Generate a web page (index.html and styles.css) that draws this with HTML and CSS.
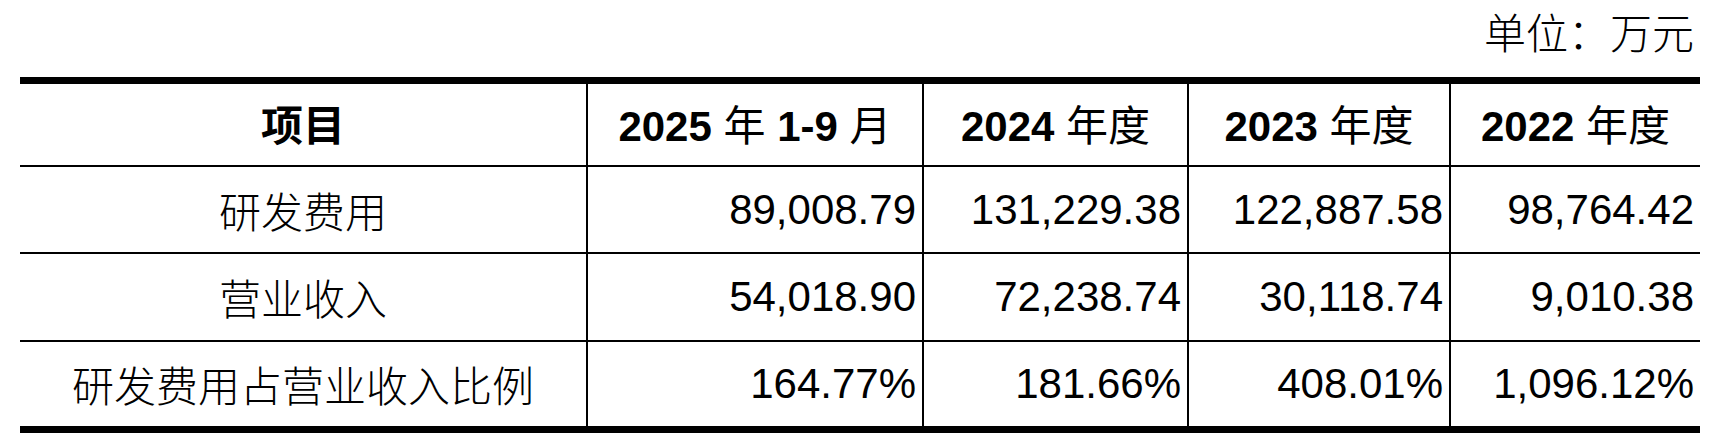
FILE: index.html
```html
<!DOCTYPE html>
<html lang="zh-CN">
<head>
<meta charset="utf-8">
<title>研发费用占营业收入比例</title>
<link rel="stylesheet" href="styles.css">
</head>
<body>
<div class="page">
  <div class="unit">单位：万元</div>
  <table class="fin">
    <colgroup>
      <col class="c-item">
      <col class="c-2025">
      <col class="c-2024">
      <col class="c-2023">
      <col class="c-2022">
    </colgroup>
    <thead>
      <tr>
        <th><span class="cj-b">项目</span></th>
        <th>2025 <span class="cj">年</span> 1-9 <span class="cj">月</span></th>
        <th>2024 <span class="cj">年度</span></th>
        <th>2023 <span class="cj">年度</span></th>
        <th>2022 <span class="cj">年度</span></th>
      </tr>
    </thead>
    <tbody>
      <tr class="r1">
        <td class="label">研发费用</td>
        <td class="num">89,008.79</td>
        <td class="num">131,229.38</td>
        <td class="num">122,887.58</td>
        <td class="num">98,764.42</td>
      </tr>
      <tr class="r2">
        <td class="label">营业收入</td>
        <td class="num">54,018.90</td>
        <td class="num">72,238.74</td>
        <td class="num">30,118.74</td>
        <td class="num">9,010.38</td>
      </tr>
      <tr class="r3">
        <td class="label">研发费用占营业收入比例</td>
        <td class="num">164.77%</td>
        <td class="num">181.66%</td>
        <td class="num">408.01%</td>
        <td class="num">1,096.12%</td>
      </tr>
    </tbody>
  </table>
</div>
</body>
</html>
```
FILE: styles.css
```css
html, body {
  margin: 0;
  padding: 0;
  background: #ffffff;
}

body {
  color: #000000;
  font-family: "Liberation Sans", "Noto Sans CJK SC", sans-serif;
  font-size: 42px;
}

.page {
  width: 1680px;
  padding-left: 20px;
}

.unit {
  height: 61px;
  line-height: 61px;
  margin-bottom: 16px;
  padding-right: 6px;
  text-align: right;
  font-family: "Noto Sans CJK SC", sans-serif;
  font-weight: 300;
}

.fin {
  width: 1680px;
  border-collapse: collapse;
  table-layout: fixed;
  border-top: 7px solid #000;
  border-bottom: 7px solid #000;
}

.c-item { width: 567px; }
.c-2025 { width: 336px; }
.c-2024 { width: 265px; }
.c-2023 { width: 262px; }
.c-2022 { width: 250px; }

.fin th,
.fin td {
  padding: 0;
  border-left: 2px solid #000;
  border-top: 2px solid #000;
  vertical-align: middle;
  line-height: 1;
  white-space: nowrap;
}

.fin th:first-child,
.fin td:first-child {
  border-left: none;
}

.fin thead th {
  border-top: none;
  height: 81px;
  text-align: center;
  font-weight: 700;
}

.fin tbody tr td { height: 85px; }
.fin tbody tr.r2 td { height: 86px; }
.fin tbody tr.r3 td { height: 84px; }

.cj {
  font-family: "Noto Sans CJK SC", sans-serif;
  font-weight: 400;
}

.cj-b {
  font-family: "Noto Sans CJK SC", sans-serif;
  font-weight: 700;
}

.label {
  text-align: center;
  font-family: "Noto Sans CJK SC", sans-serif;
  font-weight: 300;
}

.num {
  text-align: right;
  padding-right: 6px !important;
}
```
